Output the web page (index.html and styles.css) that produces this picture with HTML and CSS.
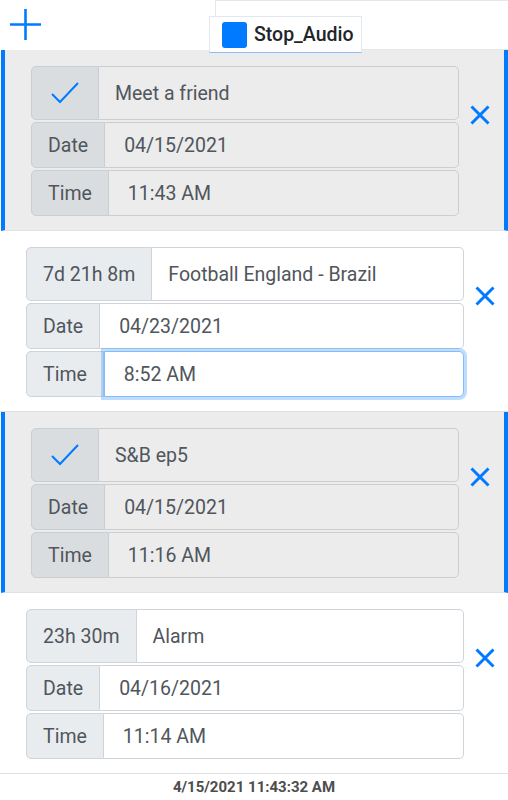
FILE: index.html
```html
<!DOCTYPE html>
<html lang="en">
<head>
    <meta charset="UTF-8">
    <meta name="viewport" content="width=device-width, initial-scale=1.0">
    <title>Alarms</title>
    <link rel="stylesheet" href="styles.css">
</head>
<body>

    <header class="topbar">
        <button class="add-btn" aria-label="Add alarm">
            <svg width="31" height="31" viewBox="0 0 31 31"><path d="M15.5 0V31M0 15.5H31" stroke="#007bff" stroke-width="2.6" fill="none"/></svg>
        </button>
        <div class="toolbar"></div>
        <button class="stop-btn"><span class="stop-icon"></span>Stop_Audio</button>
    </header>

    <main class="alarms">
        <!-- finished alarm -->
        <div class="alarm done">
            <div class="fields">
                <div class="group main">
                    <span class="prepend check">
                        <svg width="28" height="22" viewBox="0 0 28 22"><path d="M1 12L9 20L27 1" stroke="#007bff" stroke-width="2" fill="none"/></svg>
                    </span>
                    <input class="value" type="text" value="Meet a friend" readonly>
                </div>
                <div class="group">
                    <span class="prepend">Date</span>
                    <input class="value when" type="text" value="04/15/2021" readonly>
                </div>
                <div class="group">
                    <span class="prepend">Time</span>
                    <input class="value when" type="text" value="11:43 AM" readonly>
                </div>
            </div>
            <button class="remove" aria-label="Remove">
                <svg width="20" height="20" viewBox="0 0 20 20"><path d="M1.5 1.5L18.5 18.5M18.5 1.5L1.5 18.5" stroke="#007bff" stroke-width="3" fill="none"/></svg>
            </button>
        </div>

        <div class="alarm">
            <div class="fields">
                <div class="group main">
                    <span class="prepend">7d 21h 8m</span>
                    <input class="value" type="text" value="Football England - Brazil">
                </div>
                <div class="group">
                    <span class="prepend">Date</span>
                    <input class="value when" type="text" value="04/23/2021">
                </div>
                <div class="group">
                    <span class="prepend">Time</span>
                    <input class="value when focus" type="text" value="8:52 AM">
                </div>
            </div>
            <button class="remove" aria-label="Remove">
                <svg width="20" height="20" viewBox="0 0 20 20"><path d="M1.5 1.5L18.5 18.5M18.5 1.5L1.5 18.5" stroke="#007bff" stroke-width="3" fill="none"/></svg>
            </button>
        </div>

        <div class="alarm done">
            <div class="fields">
                <div class="group main">
                    <span class="prepend check">
                        <svg width="28" height="22" viewBox="0 0 28 22"><path d="M1 12L9 20L27 1" stroke="#007bff" stroke-width="2" fill="none"/></svg>
                    </span>
                    <input class="value" type="text" value="S&amp;B ep5" readonly>
                </div>
                <div class="group">
                    <span class="prepend">Date</span>
                    <input class="value when" type="text" value="04/15/2021" readonly>
                </div>
                <div class="group">
                    <span class="prepend">Time</span>
                    <input class="value when" type="text" value="11:16 AM" readonly>
                </div>
            </div>
            <button class="remove" aria-label="Remove">
                <svg width="20" height="20" viewBox="0 0 20 20"><path d="M1.5 1.5L18.5 18.5M18.5 1.5L1.5 18.5" stroke="#007bff" stroke-width="3" fill="none"/></svg>
            </button>
        </div>

        <div class="alarm">
            <div class="fields">
                <div class="group main">
                    <span class="prepend">23h 30m</span>
                    <input class="value" type="text" value="Alarm">
                </div>
                <div class="group">
                    <span class="prepend">Date</span>
                    <input class="value when" type="text" value="04/16/2021">
                </div>
                <div class="group">
                    <span class="prepend">Time</span>
                    <input class="value when" type="text" value="11:14 AM">
                </div>
            </div>
            <button class="remove" aria-label="Remove">
                <svg width="20" height="20" viewBox="0 0 20 20"><path d="M1.5 1.5L18.5 18.5M18.5 1.5L1.5 18.5" stroke="#007bff" stroke-width="3" fill="none"/></svg>
            </button>
        </div>
    </main>

    <footer class="clock">4/15/2021 11:43:32 AM</footer>

</body>
</html>
```

FILE: styles.css
```css
* {
    box-sizing: border-box;
}
body {
    margin: 0;
    font-family: Roboto, "Liberation Sans", sans-serif;
    color: #495057;
    background: #fff;
}
button {
    font: inherit;
    background: none;
    border: none;
    padding: 0;
    cursor: pointer;
}

/* top bar */
.topbar {
    position: relative;
    display: flex;
    height: 50px;
}
.add-btn {
    width: 31px;
    height: 31px;
    margin: 9px 0 0 10px;
    display: flex;
}
.toolbar {
    margin-left: auto;
    width: 293px;
    height: 50px;
    border: 1px solid #e4e6e8;
    border-right: none;
}
.stop-btn {
    position: absolute;
    left: 209px;
    top: 16px;
    width: 153px;
    height: 37px;
    display: flex;
    align-items: center;
    gap: 7px;
    padding: 0 4px 0 12px;
    background: #fff;
    border: 1px solid #e1e8f1;
    border-bottom-color: #8fbcf3;
    color: #212529;
    font-size: 19.5px;
    font-weight: 500;
    white-space: nowrap;
}
.stop-icon {
    flex-shrink: 0;
    width: 25px;
    height: 26px;
    border-radius: 3px;
    background: #007bff;
}

/* alarm cards */
.alarm {
    display: flex;
    align-items: flex-start;
    gap: 11px;
    padding: 16px 13px 14px 26px;
    border-bottom: 1px solid #dee2e6;
    background: #fff;
}
.alarm.done {
    margin-left: 1px;
    padding-left: 26px;
    padding-right: 14px;
    background: #ececec;
    border-left: 4px solid #007bff;
    border-right: 4px solid #007bff;
}
.fields {
    flex: 1;
    display: flex;
    flex-direction: column;
    gap: 2px;
    min-width: 0;
}
.group {
    display: flex;
    height: 46px;
}
.group.main {
    height: 54px;
}
.prepend {
    display: flex;
    align-items: center;
    justify-content: center;
    padding: 0 16px;
    font-size: 19.5px;
    color: #50565c;
    background: #e9ecef;
    border: 1px solid #ced4da;
    border-radius: 5px 0 0 5px;
    white-space: nowrap;
}
.prepend.check {
    width: 68px;
    padding: 0;
}
.value {
    flex: 1;
    min-width: 0;
    height: 100%;
    padding: 0 16px;
    font: inherit;
    font-size: 19.5px;
    color: #50565c;
    background: #fff;
    border: 1px solid #ced4da;
    border-left: none;
    border-radius: 0 5px 5px 0;
    outline: none;
}
.value.when {
    padding-left: 19px;
}
.value.focus {
    position: relative;
    border: 1px solid #80bdff;
    box-shadow: 0 0 0 3px rgba(0, 123, 255, 0.25);
}
.done .prepend {
    background: #dadde0;
    border-color: #c9ced3;
}
.done .value {
    background: #ececec;
    border-color: #c9ced3;
}
.remove {
    width: 20px;
    height: 20px;
    margin-top: 39px;
    display: flex;
}

.clock {
    height: 26px;
    line-height: 26px;
    text-align: center;
    font-size: 15px;
    font-weight: bold;
    color: #4d4d4d;
}
```
